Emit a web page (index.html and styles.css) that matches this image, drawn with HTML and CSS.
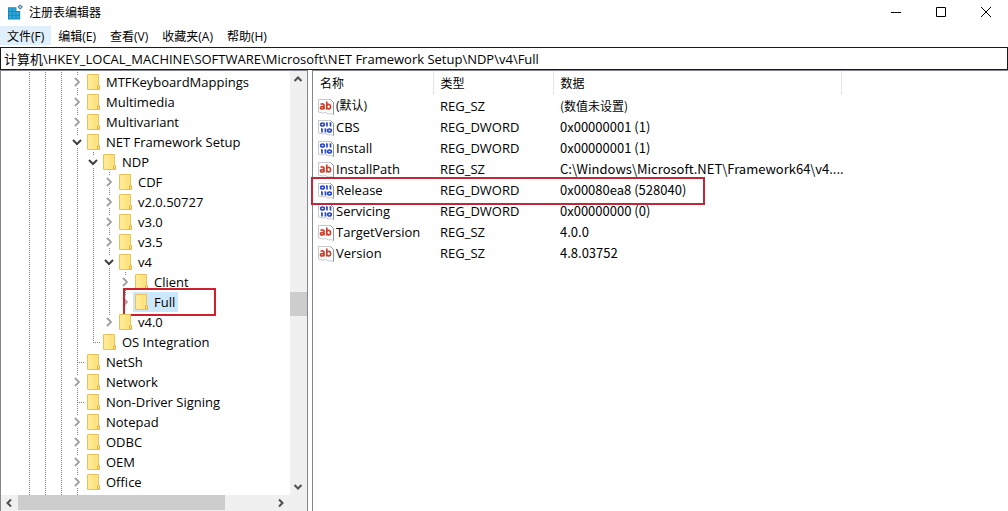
FILE: index.html
```html
<!DOCTYPE html>
<html lang="zh-CN">
<head>
  <meta charset="UTF-8">
  <meta name="viewport" content="width=device-width, initial-scale=1.0">
  <title>注册表编辑器</title>
  <link rel="stylesheet" href="styles.css">
</head>
<body>
  <!-- shared icons -->
  <svg class="sprite" aria-hidden="true">
    <symbol id="folder" viewBox="0 0 14 16">
      <path d="M.5.5h11v11l1 1v3H.5z" fill="#ffe37f" stroke="#e9c25f"/>
      <path d="M1 1h5v14H1z" fill="#ffeb9a" opacity=".7"/>
      <path d="M10.500 15v-3l1-1.500 1 1.500v3z" fill="#ffdf70" stroke="#e3b64e"/>
    </symbol>
    <symbol id="right" viewBox="0 0 16 16">
      <path d="M6 4l4 4-4 4" fill="none" stroke="#a0a0a0" stroke-width="1.800"/>
    </symbol>
    <symbol id="down" viewBox="0 0 16 16">
      <path d="M4 6l4 4 4-4" fill="none" stroke="#404040" stroke-width="2"/>
    </symbol>
    <symbol id="page" viewBox="0 0 16 16">
      <path d="M.5.5h12l3 3v12l-3-1-2 .5-3-1.500-3 .5-4-1z" fill="#fff" stroke="#c3c9cf"/>
      <path d="M12.500.5l3 3v12" fill="none" stroke="#8d959c"/>
    </symbol>
    <symbol id="string" viewBox="0 0 16 16">
      <use href="#page"/>
      <g fill="none" stroke="#cf3f2c" stroke-width="1.700">
        <path d="M2.500 5.300q3.500-1 3.500 1v4.200M6 7.300q-3.500 0-3.500 1.500t1.700 1.200q1.800-.3 1.800-1.700"/>
        <path d="M8.800 2.500v8M8.800 6.500q1-1.500 2.300-1.200 1.600.4 1.500 2.500-.2 2.300-1.900 2.100-1.200-.1-1.900-1.200"/>
      </g>
    </symbol>
    <symbol id="binary" viewBox="0 0 16 16">
      <use href="#page"/>
      <g fill="none" stroke="#2a48cc" stroke-width="1.700">
        <ellipse cx="4.500" cy="4.500" rx="1.800" ry="1.500"/>
        <path d="M9 2.500v4M8 3.200h1M12.500 2.500v4M11.500 3.200h1"/>
        <path d="M4 8.500v4M3 9.200h1M7.500 8.500v4M6.500 9.200h1"/>
        <ellipse cx="11.500" cy="10.500" rx="1.800" ry="1.500"/>
      </g>
    </symbol>
  </svg>

  <div class="window">
    <header class="title-bar">
      <svg class="app-icon" viewBox="0 0 16 16">
        <path d="M0 3h9v4h4v9H0z" fill="#1687bd"/>
        <path d="M1 4h3v3H1zM5 4h3v3H5zM1 8h3v3H1zM5 8h3v3H5zM9 8h3v3H9zM1 12h3v3H1zM5 12h3v3H5zM9 12h3v3H9z" fill="#2fa8d8"/>
        <path d="M13 0l3 2.500-3 3-3-3z" fill="#4d7f98"/>
        <path d="M13 1.500l1.500 1-1.500 1.500-1.500-1.500z" fill="#b5e4f4"/>
      </svg>
      <h1>注册表编辑器</h1>
      <div class="window-buttons">
        <button aria-label="最小化"><svg viewBox="0 0 12 12"><path d="M1 6.500h10"/></svg></button>
        <button aria-label="最大化"><svg viewBox="0 0 12 12"><path d="M1.500 1.500h9v9h-9z"/></svg></button>
        <button aria-label="关闭"><svg viewBox="0 0 12 12"><path d="M1 1l10 10M11 1L1 11"/></svg></button>
      </div>
    </header>

    <nav class="menu-bar">
      <button class="active">文件(F)</button>
      <button>编辑(E)</button>
      <button>查看(V)</button>
      <button>收藏夹(A)</button>
      <button>帮助(H)</button>
    </nav>

    <input class="address" type="text" aria-label="地址" value="计算机\HKEY_LOCAL_MACHINE\SOFTWARE\Microsoft\NET Framework Setup\NDP\v4\Full">

    <main class="panes">
      <section class="tree-pane">
        <div class="tree">
          <ul class="root">
            <li><div class="row"><button class="toggle" aria-label="展开"><svg><use href="#right"/></svg></button><span class="key"><svg><use href="#folder"/></svg>MTFKeyboardMappings</span></div></li>
            <li><div class="row"><button class="toggle" aria-label="展开"><svg><use href="#right"/></svg></button><span class="key"><svg><use href="#folder"/></svg>Multimedia</span></div></li>
            <li><div class="row"><button class="toggle" aria-label="展开"><svg><use href="#right"/></svg></button><span class="key"><svg><use href="#folder"/></svg>Multivariant</span></div></li>
            <li>
              <div class="row"><button class="toggle" aria-label="折叠"><svg><use href="#down"/></svg></button><span class="key"><svg><use href="#folder"/></svg>NET Framework Setup</span></div>
              <ul>
                <li>
                  <div class="row"><button class="toggle" aria-label="折叠"><svg><use href="#down"/></svg></button><span class="key"><svg><use href="#folder"/></svg>NDP</span></div>
                  <ul>
                    <li><div class="row"><button class="toggle" aria-label="展开"><svg><use href="#right"/></svg></button><span class="key"><svg><use href="#folder"/></svg>CDF</span></div></li>
                    <li><div class="row"><button class="toggle" aria-label="展开"><svg><use href="#right"/></svg></button><span class="key"><svg><use href="#folder"/></svg>v2.0.50727</span></div></li>
                    <li><div class="row"><button class="toggle" aria-label="展开"><svg><use href="#right"/></svg></button><span class="key"><svg><use href="#folder"/></svg>v3.0</span></div></li>
                    <li><div class="row"><button class="toggle" aria-label="展开"><svg><use href="#right"/></svg></button><span class="key"><svg><use href="#folder"/></svg>v3.5</span></div></li>
                    <li>
                      <div class="row"><button class="toggle" aria-label="折叠"><svg><use href="#down"/></svg></button><span class="key"><svg><use href="#folder"/></svg>v4</span></div>
                      <ul>
                        <li><div class="row"><button class="toggle" aria-label="展开"><svg><use href="#right"/></svg></button><span class="key"><svg><use href="#folder"/></svg>Client</span></div></li>
                        <li><div class="row marked"><button class="toggle" aria-label="展开"><svg><use href="#right"/></svg></button><span class="key selected"><svg><use href="#folder"/></svg>Full</span></div></li>
                      </ul>
                    </li>
                    <li><div class="row"><button class="toggle" aria-label="展开"><svg><use href="#right"/></svg></button><span class="key"><svg><use href="#folder"/></svg>v4.0</span></div></li>
                  </ul>
                </li>
                <li><div class="row"><span class="leaf"></span><span class="key"><svg><use href="#folder"/></svg>OS Integration</span></div></li>
              </ul>
            </li>
            <li><div class="row"><span class="leaf"></span><span class="key"><svg><use href="#folder"/></svg>NetSh</span></div></li>
            <li><div class="row"><button class="toggle" aria-label="展开"><svg><use href="#right"/></svg></button><span class="key"><svg><use href="#folder"/></svg>Network</span></div></li>
            <li><div class="row"><span class="leaf"></span><span class="key"><svg><use href="#folder"/></svg>Non-Driver Signing</span></div></li>
            <li><div class="row"><button class="toggle" aria-label="展开"><svg><use href="#right"/></svg></button><span class="key"><svg><use href="#folder"/></svg>Notepad</span></div></li>
            <li><div class="row"><button class="toggle" aria-label="展开"><svg><use href="#right"/></svg></button><span class="key"><svg><use href="#folder"/></svg>ODBC</span></div></li>
            <li><div class="row"><button class="toggle" aria-label="展开"><svg><use href="#right"/></svg></button><span class="key"><svg><use href="#folder"/></svg>OEM</span></div></li>
            <li><div class="row"><button class="toggle" aria-label="展开"><svg><use href="#right"/></svg></button><span class="key"><svg><use href="#folder"/></svg>Office</span></div></li>
          </ul>
        </div>
        <div class="scroll-y">
          <button aria-label="向上滚动"><svg viewBox="0 0 16 16"><path d="M4.500 10L8 6.500l3.500 3.500"/></svg></button>
          <div class="track"><div class="thumb"></div></div>
          <button aria-label="向下滚动"><svg viewBox="0 0 16 16"><path d="M4.500 6L8 9.500 11.500 6"/></svg></button>
        </div>
        <div class="scroll-x">
          <button aria-label="向左滚动"><svg viewBox="0 0 16 16"><path d="M10 4.500L6.500 8l3.500 3.500"/></svg></button>
          <div class="track"><div class="thumb"></div></div>
          <button aria-label="向右滚动"><svg viewBox="0 0 16 16"><path d="M6 4.500L9.500 8 6 11.500"/></svg></button>
        </div>
      </section>

      <section class="value-pane">
        <table>
          <thead>
            <tr><th class="name">名称</th><th class="type">类型</th><th class="data">数据</th><th></th></tr>
          </thead>
          <tbody>
            <tr><td><svg><use href="#string"/></svg><span class="zh">(默认)</span></td><td>REG_SZ</td><td><span class="zh">(数值未设置)</span></td></tr>
            <tr><td><svg><use href="#binary"/></svg>CBS</td><td>REG_DWORD</td><td>0x00000001 (1)</td></tr>
            <tr><td><svg><use href="#binary"/></svg>Install</td><td>REG_DWORD</td><td>0x00000001 (1)</td></tr>
            <tr><td><svg><use href="#string"/></svg>InstallPath</td><td>REG_SZ</td><td>C:\Windows\Microsoft.NET\Framework64\v4....</td></tr>
            <tr class="marked"><td><svg><use href="#binary"/></svg>Release</td><td>REG_DWORD</td><td>0x00080ea8 (528040)</td></tr>
            <tr><td><svg><use href="#binary"/></svg>Servicing</td><td>REG_DWORD</td><td>0x00000000 (0)</td></tr>
            <tr><td><svg><use href="#string"/></svg>TargetVersion</td><td>REG_SZ</td><td>4.0.0</td></tr>
            <tr><td><svg><use href="#string"/></svg>Version</td><td>REG_SZ</td><td>4.8.03752</td></tr>
          </tbody>
        </table>
      </section>
    </main>
  </div>
</body>
</html>
```
FILE: styles.css
```css
*,
*::after {
  box-sizing: border-box;
}

body {
  margin: 0;
  background: #fff;
  color: #000;
  font-family: "Open Sans", "Noto Sans CJK SC", sans-serif;
  font-size: 12px;
}

button {
  margin: 0;
  padding: 0;
  border: none;
  background: none;
  color: inherit;
  font: inherit;
}

.sprite {
  display: none;
}

.window {
  display: flex;
  flex-direction: column;
  height: 100vh;
  overflow: hidden;
}

/* title and menu */
.title-bar {
  display: flex;
  align-items: center;
  flex: none;
  height: 23px;
  padding: 0 0 0 8px;
}

.app-icon {
  width: 15px;
  height: 16px;
}

.title-bar h1 {
  margin: 0 0 0 6px;
  font-size: 12px;
  font-weight: normal;
}

.window-buttons {
  display: flex;
  margin-left: auto;
}

.window-buttons button {
  width: 45px;
  height: 23px;
}

.window-buttons svg {
  display: block;
  width: 12px;
  height: 12px;
  margin: 0 auto;
  fill: none;
  stroke: #000;
}

.menu-bar {
  display: flex;
  flex: none;
  height: 24px;
  padding: 3px 0 2px;
}

.menu-bar button {
  padding: 0 7px;
}

.menu-bar .active {
  background: #e0effc;
}

.address {
  flex: none;
  width: 100%;
  height: 23px;
  padding: 0 3px 1px;
  border: 1px solid #1a1a1a;
  border-radius: 0;
  outline: none;
  font: inherit;
  font-size: 13px;
}

/* panes */
.panes {
  display: flex;
  flex: 1;
  gap: 4px;
  min-height: 0;
}

.tree-pane {
  display: grid;
  grid-template: minmax(0, 1fr) 16px / minmax(0, 1fr) 17px;
  flex: none;
  width: 308px;
  border: 1px solid #828790;
  border-bottom: none;
}

.tree {
  overflow: hidden;
  padding: 1px 0 0 20px;
  font-size: 13px;
}

.tree ul {
  margin: 0;
  padding: 0 0 0 16px;
  list-style: none;
}

/* guides of the levels above the visible keys */
.tree .root {
  height: 100%;
  padding-left: 48px;
  background:
    repeating-linear-gradient(#808080 0 1px, transparent 1px 2px) 8px 0 / 1px 100% no-repeat,
    repeating-linear-gradient(#808080 0 1px, transparent 1px 2px) 24px 0 / 1px 100% no-repeat,
    repeating-linear-gradient(#808080 0 1px, transparent 1px 2px) 40px 0 / 1px 100% no-repeat,
    repeating-linear-gradient(#808080 0 1px, transparent 1px 2px) 56px 0 / 1px 100% no-repeat;
}

.root ul > li {
  background: repeating-linear-gradient(#808080 0 1px, transparent 1px 2px) 8px 0 / 1px 100% no-repeat;
}

.root ul > li:last-child {
  background-size: 1px 10px;
}

.row {
  display: flex;
  align-items: center;
  position: relative;
  height: 20px;
}

.toggle {
  width: 16px;
  height: 12px;
  background: #fff;
}

.toggle svg {
  display: block;
  width: 16px;
  height: 16px;
  margin-top: -2px;
}

.leaf {
  width: 16px;
  height: 1px;
  background: repeating-linear-gradient(90deg, #808080 0 1px, transparent 1px 2px) 8px 0 no-repeat;
}

.key {
  display: flex;
  align-items: center;
  gap: 5px;
  height: 20px;
  padding: 0 3px 0 2px;
  line-height: 18px;
  white-space: nowrap;
}

.key svg {
  width: 14px;
  height: 16px;
}

.key.selected {
  background: #cce8ff;
}

.row.marked::after {
  content: "";
  position: absolute;
  top: -4px;
  left: 6px;
  width: 93px;
  height: 28px;
  border: 2px solid #d0202e;
}

/* scroll bars */
.scroll-y,
.scroll-x {
  display: flex;
  background: #f0f0f0;
}

.scroll-y {
  flex-direction: column;
}

.scroll-x {
  grid-column: 1 / 3;
  padding: 0 17px 1px 0;
}

.scroll-y button,
.scroll-x button {
  flex: none;
  width: 17px;
  height: 16px;
}

.scroll-y svg,
.scroll-x svg {
  display: block;
  width: 16px;
  height: 16px;
  fill: none;
  stroke: #505050;
  stroke-width: 2;
}

.track {
  display: flex;
  flex: 1;
}

.thumb {
  background: #cdcdcd;
}

.scroll-y .thumb {
  width: 100%;
  height: 24px;
  margin-top: 205px;
}

.scroll-x .thumb {
  width: 81%;
}

/* values */
.value-pane {
  flex: 1;
  min-width: 0;
  border-top: 1px solid #828790;
  border-left: 1px solid #828790;
}

.value-pane table {
  width: 100%;
  table-layout: fixed;
  border-collapse: collapse;
  font-size: 13px;
}

.value-pane th {
  height: 24px;
  padding: 0 7px;
  border-right: 1px solid #e5e5e5;
  font-size: 12px;
  font-weight: normal;
  text-align: left;
}

.value-pane th:last-child {
  border-right: none;
}

.name,
.type {
  width: 120px;
}

.data {
  width: 288px;
}

.value-pane td {
  height: 21px;
  padding: 0 7px;
  line-height: 20px;
  white-space: nowrap;
}

.value-pane td:first-child {
  padding-left: 5px;
}

.value-pane td:nth-child(3) {
  font-family: "Noto Sans CJK SC", sans-serif;
}

.value-pane td svg {
  width: 16px;
  height: 16px;
  margin-right: 2px;
  vertical-align: middle;
}

.value-pane .zh {
  font-size: 12px;
}

.value-pane tr.marked {
  position: relative;
}

.value-pane tr.marked td:first-child::after {
  content: "";
  position: absolute;
  top: -2px;
  left: -2px;
  width: 394px;
  height: 28px;
  border: 2px solid #c0283a;
}
```
